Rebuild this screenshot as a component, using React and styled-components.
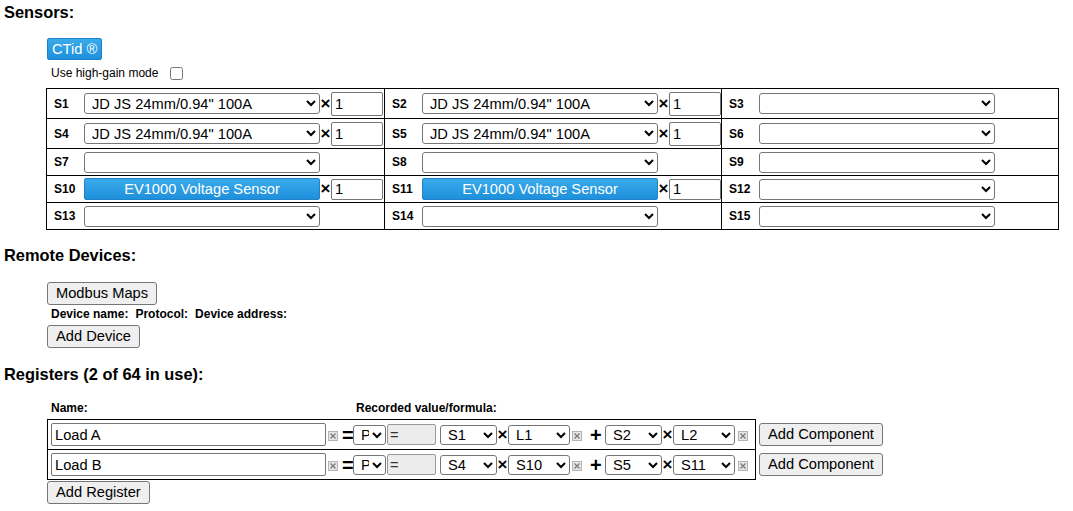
import React from 'react';
import styled, { createGlobalStyle } from 'styled-components';

const GlobalStyle = createGlobalStyle`
  body {
    margin: 0;
    background: #fff;
    color: #000;
    font-family: "Liberation Sans", Arial, sans-serif;
  }
  * {
    box-sizing: border-box;
  }
  input, select, button {
    font-family: "Liberation Sans", Arial, sans-serif;
  }
`;

const Page = styled.div`
  padding: 3px 4px 0;
`;

const Heading = styled.h3`
  margin: ${p => p.$top || 0}px 0 ${p => p.$bottom || 0}px;
  font-size: 16.4px;
  line-height: 18px;
  font-weight: bold;
`;

const Indent = styled.div`
  display: flex;
  flex-direction: column;
  align-items: flex-start;
  margin-left: 43px;
`;

const BlueButton = styled.button`
  width: ${p => (p.$w ? `${p.$w}px` : 'auto')};
  height: 22px;
  padding: 0 4px;
  margin: 0;
  border: 1px solid #1f82c8;
  border-radius: 2px;
  background: linear-gradient(#3aaaea, #1e90dc);
  color: #fff;
  font-size: 14.67px;
  line-height: 20px;
  text-align: center;
  cursor: pointer;
`;

const GrayButton = styled.button`
  height: 23px;
  padding: 0 8px;
  margin: ${p => p.$mt || 0}px 0 0;
  border: 1px solid #767676;
  border-radius: 3px;
  background: #efefef;
  color: #000;
  font-size: 14.67px;
  line-height: 21px;
  white-space: nowrap;
  cursor: pointer;
`;

const GainRow = styled.label`
  display: flex;
  align-items: center;
  height: 18px;
  margin-top: 4px;
  padding-left: 4px;
  font-size: 12px;
`;

const Check = styled.input`
  width: 13px;
  height: 13px;
  margin: 0 0 0 12px;
`;

const SensorGrid = styled.div`
  display: grid;
  grid-template-columns: 338px 337px 337px;
  margin: 6px 0 0 -1px;
  border-top: 1px solid #000;
  border-left: 1px solid #000;
`;

const SensorCell = styled.div`
  display: flex;
  align-items: center;
  height: ${p => (p.$tall ? 30 : 27)}px;
  padding-left: 7px;
  border-right: 1px solid #000;
  border-bottom: 1px solid #000;
`;

const SensorLabel = styled.span`
  width: 30px;
  font-size: 12px;
  font-weight: bold;
`;

const Select = styled.select`
  width: ${p => p.$w}px;
  height: ${p => p.$h || 21}px;
  margin: 0 0 0 ${p => p.$ml || 0}px;
  padding: 0 0 0 3px;
  border: 1px solid #767676;
  border-radius: 3px;
  background: #fff;
  color: #000;
  font-size: 14.67px;
`;

const TextInput = styled.input`
  width: ${p => p.$w}px;
  height: ${p => p.$h || 23}px;
  margin: 0;
  padding: 0 3px;
  border: 1px solid #767676;
  border-radius: 2px;
  background: #fff;
  color: #000;
  font-size: 14.67px;
`;

const FixedInput = styled.input`
  width: 49px;
  height: 21px;
  margin: 0 0 0 1px;
  padding: 0 2px;
  border: 1px solid #9a9a9a;
  border-radius: 2px;
  background: #ececec;
  color: #333;
  font-size: 14.67px;
`;

const Op = styled.span`
  display: inline-block;
  width: ${p => p.$w || 11}px;
  margin-left: ${p => p.$ml || 0}px;
  font-size: ${p => p.$size || 17}px;
  font-weight: bold;
  line-height: 18px;
  text-align: center;
`;

const XBox = styled.svg`
  width: 10px;
  height: 10px;
  margin: 3px 0 0 ${p => p.$ml || 2}px;
  flex: none;
`;

const DeviceLabels = styled.div`
  display: flex;
  gap: 7px;
  margin: 2px 0 4px;
  padding-left: 4px;
  font-size: 12px;
  font-weight: bold;
  line-height: 14px;
`;

const RegisterLabels = styled.div`
  display: grid;
  grid-template-columns: 305px auto;
  margin-bottom: 4px;
  padding-left: 4px;
  font-size: 12px;
  font-weight: bold;
  line-height: 14px;
`;

const RegisterRow = styled.div`
  display: flex;
  align-items: center;
  gap: 3px;

  & + & {
    margin-top: -1px;
  }
`;

const RegisterBox = styled.div`
  display: flex;
  align-items: center;
  width: 709px;
  height: 31px;
  padding-left: 3px;
  border: 1px solid #000;
`;

const RemoveIcon = ({ ml }) => (
  <XBox $ml={ml} viewBox="0 0 10 10">
    <rect x="0.5" y="0.5" width="9" height="9" fill="#e6e6e6" stroke="#b4b4b4" />
    <path d="M2.5 2.5 L7.5 7.5 M7.5 2.5 L2.5 7.5" stroke="#7a7a7a" strokeWidth="1.3" />
  </XBox>
);

const CT = 'JD JS 24mm/0.94" 100A';

const sensorRows = [
  { tall: true, cells: [['S1', 'ct'], ['S2', 'ct'], ['S3', '']] },
  { tall: true, cells: [['S4', 'ct'], ['S5', 'ct'], ['S6', '']] },
  { tall: false, cells: [['S7', ''], ['S8', ''], ['S9', '']] },
  { tall: false, cells: [['S10', 'ev'], ['S11', 'ev'], ['S12', '']] },
  { tall: false, cells: [['S13', ''], ['S14', ''], ['S15', '']] },
];

const registers = [
  { name: 'Load A', a: 'S1', la: 'L1', b: 'S2', lb: 'L2' },
  { name: 'Load B', a: 'S4', la: 'S10', b: 'S5', lb: 'S11' },
];

const Sensor = ({ id, kind, tall }) => (
  <SensorCell $tall={tall}>
    <SensorLabel>{id}</SensorLabel>
    {kind === 'ev' ? (
      <BlueButton $w={236}>EV1000 Voltage Sensor</BlueButton>
    ) : (
      <Select $w={236} defaultValue={kind === 'ct' ? CT : ''}>
        <option value=""></option>
        <option value={CT}>{CT}</option>
      </Select>
    )}
    {kind && (
      <>
        <Op>×</Op>
        <TextInput $w={52} $h={tall ? 24 : 21} defaultValue="1" />
      </>
    )}
  </SensorCell>
);

const Register = ({ reg }) => (
  <RegisterRow>
    <RegisterBox>
      <TextInput $w={275} defaultValue={reg.name} />
      <RemoveIcon />
      <Op $w={10} $ml={4} $size={20}>=</Op>
      <Select $w={33} $h={20} $ml={1} defaultValue="P">
        <option>P</option>
      </Select>
      <FixedInput readOnly value="=" />
      <Select $w={57} $h={20} $ml={4} defaultValue={reg.a}>
        <option>{reg.a}</option>
      </Select>
      <Op>×</Op>
      <Select $w={62} $h={20} defaultValue={reg.la}>
        <option>{reg.la}</option>
      </Select>
      <RemoveIcon />
      <Op $w={10} $ml={8} $size={20}>+</Op>
      <Select $w={57} $h={20} $ml={5} defaultValue={reg.b}>
        <option>{reg.b}</option>
      </Select>
      <Op>×</Op>
      <Select $w={62} $h={20} defaultValue={reg.lb}>
        <option>{reg.lb}</option>
      </Select>
      <RemoveIcon ml={3} />
    </RegisterBox>
    <GrayButton>Add Component</GrayButton>
  </RegisterRow>
);

const App = () => (
  <Page>
    <GlobalStyle />
    <Heading $bottom={17}>Sensors:</Heading>
    <Indent>
      <BlueButton>CTid ®</BlueButton>
      <GainRow>
        Use high-gain mode
        <Check type="checkbox" />
      </GainRow>
      <SensorGrid>
        {sensorRows.map(row =>
          row.cells.map(([id, kind]) => (
            <Sensor key={id} id={id} kind={kind} tall={row.tall} />
          ))
        )}
      </SensorGrid>
    </Indent>

    <Heading $top={16} $bottom={18}>Remote Devices:</Heading>
    <Indent>
      <GrayButton>Modbus Maps</GrayButton>
      <DeviceLabels>
        <span>Device name:</span>
        <span>Protocol:</span>
        <span>Device address:</span>
      </DeviceLabels>
      <GrayButton>Add Device</GrayButton>
    </Indent>

    <Heading $top={17} $bottom={18}>Registers (2 of 64 in use):</Heading>
    <Indent>
      <RegisterLabels>
        <span>Name:</span>
        <span>Recorded value/formula:</span>
      </RegisterLabels>
      {registers.map(reg => (
        <Register key={reg.name} reg={reg} />
      ))}
      <GrayButton $mt={1}>Add Register</GrayButton>
    </Indent>
  </Page>
);

export default App;
